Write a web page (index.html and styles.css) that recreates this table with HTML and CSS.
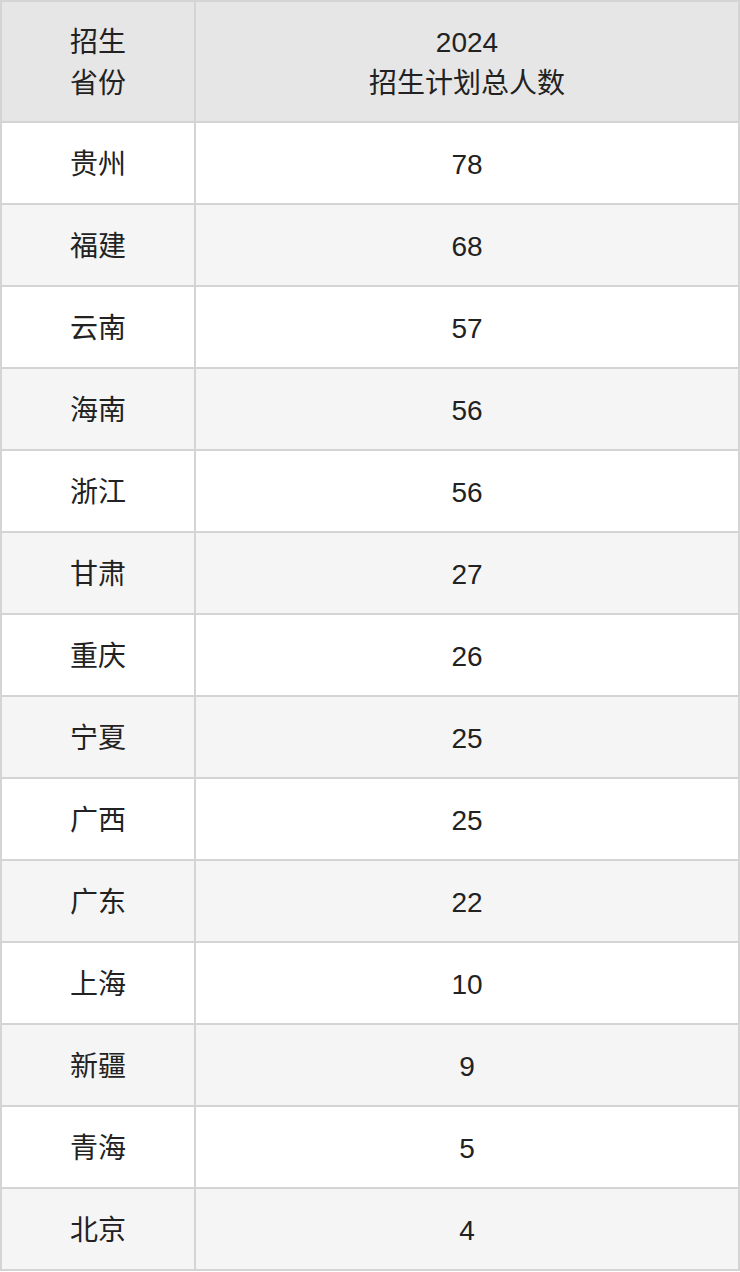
FILE: index.html
```html
<!DOCTYPE html>
<html lang="zh">
<head>
<meta charset="utf-8">
<link rel="stylesheet" href="styles.css">
</head>
<body>
<table class="plan">
  <thead>
    <tr>
      <th class="c1">招生<br>省份</th>
      <th class="c2">2024<br>招生计划总人数</th>
    </tr>
  </thead>
  <tbody>
    <tr><td>贵州</td><td>78</td></tr>
    <tr><td>福建</td><td>68</td></tr>
    <tr><td>云南</td><td>57</td></tr>
    <tr><td>海南</td><td>56</td></tr>
    <tr><td>浙江</td><td>56</td></tr>
    <tr><td>甘肃</td><td>27</td></tr>
    <tr><td>重庆</td><td>26</td></tr>
    <tr><td>宁夏</td><td>25</td></tr>
    <tr><td>广西</td><td>25</td></tr>
    <tr><td>广东</td><td>22</td></tr>
    <tr><td>上海</td><td>10</td></tr>
    <tr><td>新疆</td><td>9</td></tr>
    <tr><td>青海</td><td>5</td></tr>
    <tr><td>北京</td><td>4</td></tr>
  </tbody>
</table>
</body>
</html>
```
FILE: styles.css
```css
html, body {
  margin: 0;
  padding: 0;
  background: #ffffff;
}
.plan {
  width: 740px;
  border-collapse: separate;
  border-spacing: 0;
  border-top: 2px solid #d4d4d4;
  border-left: 2px solid #d4d4d4;
  table-layout: fixed;
  font-family: "Liberation Sans", "Noto Sans CJK SC", sans-serif;
  font-size: 28px;
  color: #222222;
}
.plan th, .plan td {
  box-sizing: border-box;
  border-right: 2px solid #d4d4d4;
  border-bottom: 2px solid #d4d4d4;
  text-align: center;
  vertical-align: middle;
  padding: 0;
  font-weight: normal;
}
.plan th {
  background: #e6e6e6;
  height: 121px;
  line-height: 41px;
  padding-top: 2px;
}
.plan th.c1 {
  width: 194px;
}
.plan td {
  height: 82px;
  line-height: 41px;
  padding-top: 3px;
}
.plan tbody tr:nth-child(even) td {
  background: #f5f5f5;
}
```
